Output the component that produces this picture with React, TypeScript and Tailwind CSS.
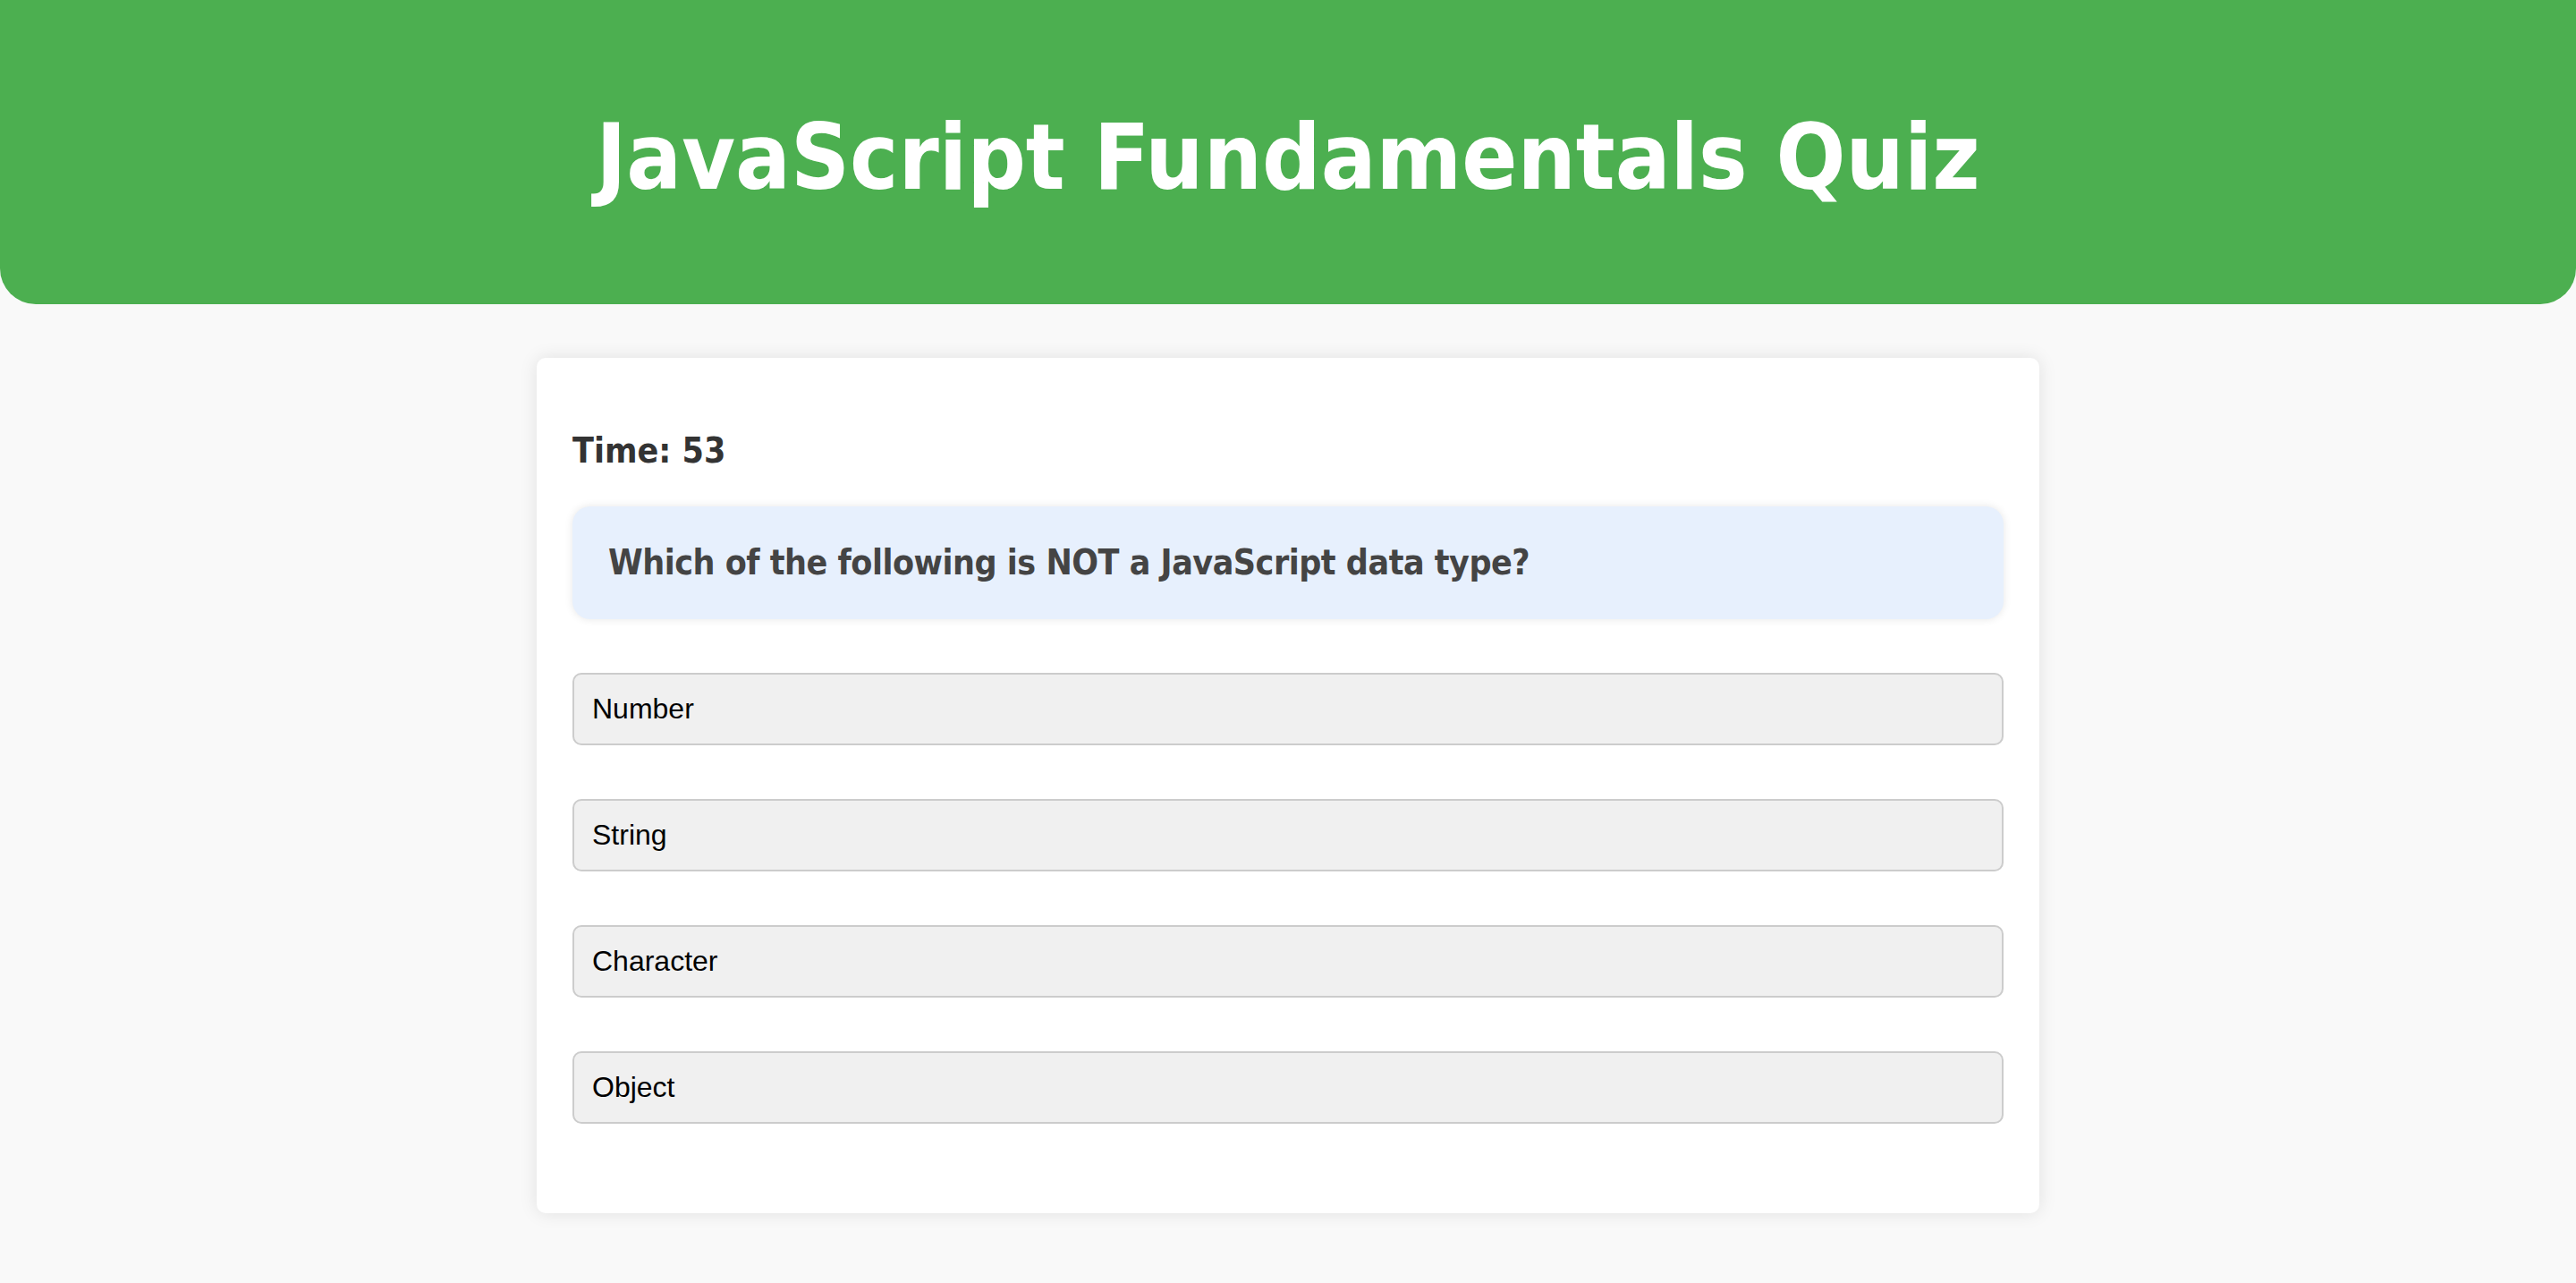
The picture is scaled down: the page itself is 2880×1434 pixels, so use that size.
import { useState } from "react";

const options = ["Number", "String", "Character", "Object"];

export default function App() {
  const [time] = useState(53);

  return (
    <div className="min-h-screen bg-[#f9f9f9] pb-[78px]">
      {/* HEADER */}
      <header className="flex h-[340px] items-center justify-center rounded-b-[40px] bg-[#4caf50] pt-[11px]">
        <h1 className="font-['DejaVu_Sans_Condensed','DejaVu_Sans',sans-serif] text-[102px] font-bold leading-[119px] text-white">
          JavaScript Fundamentals Quiz
        </h1>
      </header>

      {/* QUIZ CARD */}
      <div className="mx-auto mt-[60px] w-[1680px] rounded-[10px] bg-white p-[40px] shadow-[0_0_20px_rgba(0,0,0,0.1)]">
        <div className="mt-[41px] font-['DejaVu_Sans_Condensed','DejaVu_Sans',sans-serif] text-[39px] font-bold leading-[46px] text-[#333]">
          Time: {time}
        </div>

        <div className="mt-[39px] rounded-[20px] bg-[#e7f0fd] px-[40px] py-[40px] shadow-[0_0_10px_rgba(0,0,0,0.1)]">
          <h2 className="font-['DejaVu_Sans_Condensed','DejaVu_Sans',sans-serif] text-[39px] font-bold leading-[46px] tracking-[-0.5px] text-[#444]">
            Which of the following is NOT a JavaScript data type?
          </h2>
        </div>

        <div className="mt-[60px] mb-[60px] flex flex-col gap-[60px]">
          {options.map((option) => (
            <button
              key={option}
              className="w-full rounded-[10px] border-2 border-[#ccc] bg-[#f0f0f0] px-[20px] py-[20px] text-left font-['Liberation_Sans',Arial,sans-serif] text-[32px] leading-[37px] text-black"
            >
              {option}
            </button>
          ))}
        </div>
      </div>
    </div>
  );
}
